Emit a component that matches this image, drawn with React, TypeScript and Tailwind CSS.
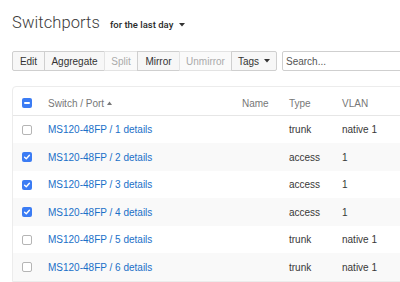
import React from "react";

const Caret = ({ className = "" }: { className?: string }) => (
  <svg width="6" height="4" viewBox="0 0 6 4" className={className}>
    <path d="M0 0 L6 0 L3 3.5 Z" fill="#333" />
  </svg>
);

const Check = ({ state }: { state: "on" | "off" | "mixed" }) => {
  if (state === "off")
    return <div className="w-[10px] h-[10px] rounded-[2px] border border-[#b5b5b5] bg-white" />;
  return (
    <div className="w-[10px] h-[10px] rounded-[2px] bg-[#3b7cf4] flex items-center justify-center">
      {state === "mixed" ? (
        <div className="w-[6px] h-[2px] bg-white rounded-[1px]" />
      ) : (
        <svg width="8" height="8" viewBox="0 0 8 8">
          <path d="M1.6 4.2 L3.3 5.8 L6.4 2.2" stroke="white" strokeWidth="1.4" fill="none" strokeLinecap="round" strokeLinejoin="round" />
        </svg>
      )}
    </div>
  );
};

const rows = [
  { n: 1, c: false, type: "trunk", vlan: "native 1" },
  { n: 2, c: true, type: "access", vlan: "1" },
  { n: 3, c: true, type: "access", vlan: "1" },
  { n: 4, c: true, type: "access", vlan: "1" },
  { n: 5, c: false, type: "trunk", vlan: "native 1" },
  { n: 6, c: false, type: "trunk", vlan: "native 1" },
];

const btn = "h-[20px] flex items-center justify-center border border-[#cfcfcf] -ml-px first:ml-0 text-[10px]";

export default function App() {
  return (
    <div className="w-[400px] h-[282px] overflow-hidden bg-white pl-[12px] text-[#333]" style={{ fontFamily: '"Liberation Sans", Arial, sans-serif' }}>
      <div className="flex items-baseline pt-[11px] h-[40px]">
        <span className="text-[16.5px] font-light text-[#3a3a3a] tracking-[0.1px]" style={{ fontFamily: 'Roboto, "Liberation Sans", sans-serif' }}>Switchports</span>
        <span className="ml-[10px] text-[9.5px] font-medium text-[#2a2a2a] flex items-center" style={{ fontFamily: 'Roboto, "Liberation Sans", sans-serif' }}>
          for the last day
          <Caret className="ml-[6px]" />
        </span>
      </div>
      <div className="flex mt-[11px] h-[20px]">
        <div className="flex">
          <div className={`${btn} w-[33px] bg-[#f7f7f7] rounded-l-[2px]`}>Edit</div>
          <div className={`${btn} w-[61px] bg-[#f7f7f7]`}>Aggregate</div>
          <div className={`${btn} w-[34px] bg-[#fafafa] text-[#aaa] border-[#e3e3e3]`}>Split</div>
          <div className={`${btn} w-[43px] bg-[#f7f7f7]`}>Mirror</div>
          <div className={`${btn} w-[53px] bg-[#fafafa] text-[#aaa] border-[#e3e3e3]`}>Unmirror</div>
          <div className={`${btn} w-[46px] bg-[#f7f7f7] rounded-r-[2px]`}>
            Tags
            <Caret className="ml-[5px]" />
          </div>
        </div>
        <div className="ml-[5px] w-[170px] shrink-0 h-[20px] border border-[#cfcfcf] rounded-[2px] flex items-center pl-[3px] text-[10px] text-[#555]">
          Search...
        </div>
      </div>
      <div className="mt-[15px] w-[420px] border border-[#ececec] rounded-tl-[4px]">
        <div className="grid grid-cols-[9px_26px_194px_47px_53px_1fr] h-[29px] items-center pt-[4px] border-b border-[#e6e6e6] text-[10px] text-[#777]">
          <div />
          <div><Check state="mixed" /></div>
          <div className="flex items-center">
            Switch / Port
            <svg width="5" height="4" viewBox="0 0 5 4" className="ml-[3px]"><path d="M0 4 L5 4 L2.5 0.5 Z" fill="#777" /></svg>
          </div>
          <div>Name</div>
          <div>Type</div>
          <div>VLAN</div>
        </div>
        {rows.map((r, i) => (
          <div key={r.n} className={`grid grid-cols-[9px_26px_194px_47px_53px_1fr] items-center text-[10px] ${i % 2 === 1 ? "bg-[#f9f9f9] h-[28px]" : "bg-white h-[27px]"}`}>
            <div />
            <div><Check state={r.c ? "on" : "off"} /></div>
            <div className="text-[#1a70c8]">MS120-48FP / {r.n} details</div>
            <div />
            <div className="text-[#383838]">{r.type}</div>
            <div className="text-[#383838]">{r.vlan}</div>
          </div>
        ))}
      </div>
    </div>
  );
}
